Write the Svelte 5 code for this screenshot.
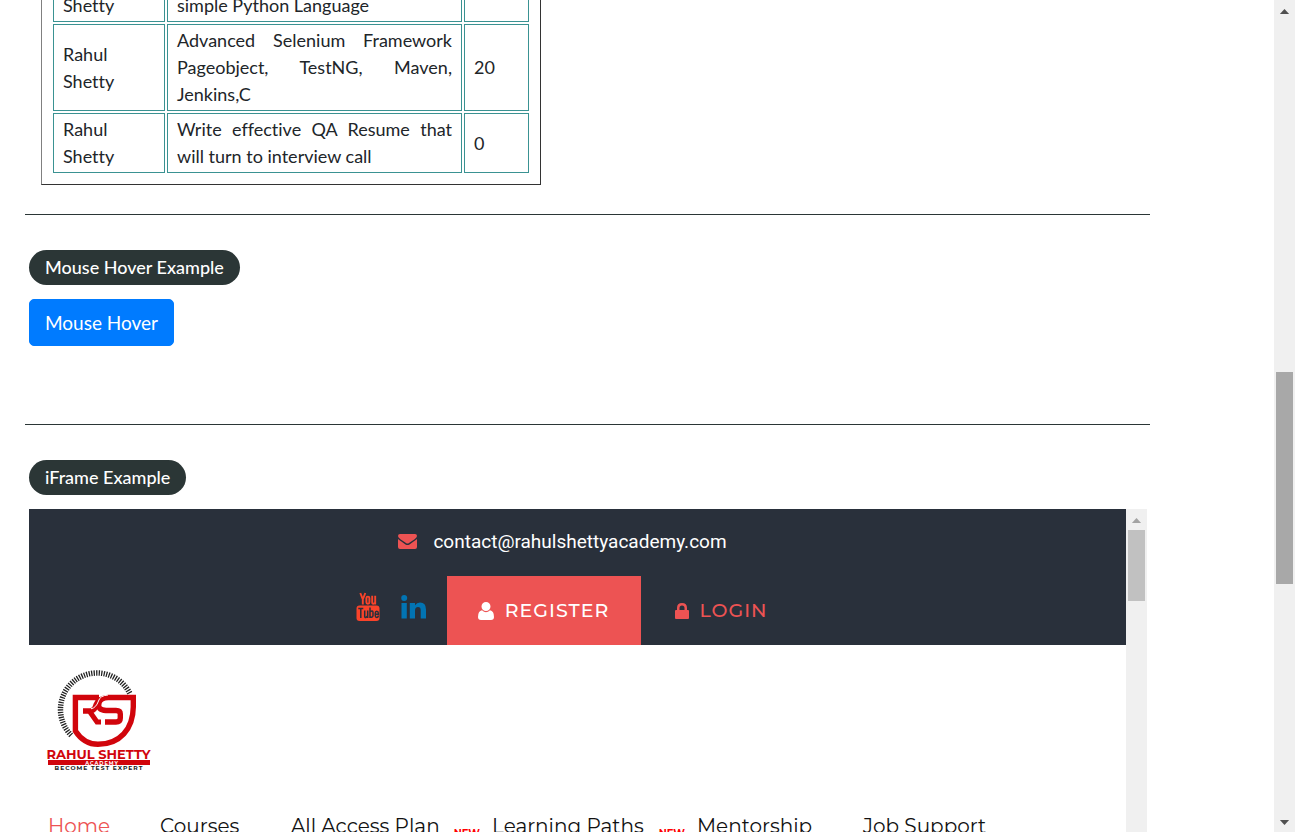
<script>
  const courses = [
    { instructor: 'Rahul Shetty', title: 'Master Selenium Automation in simple Python Language', price: '' },
    { instructor: 'Rahul Shetty', title: 'Advanced Selenium Framework Pageobject, TestNG, Maven, Jenkins,C', price: '20' },
    { instructor: 'Rahul Shetty', title: 'Write effective QA Resume that will turn to interview call', price: '0' }
  ];
  const links = [
    { label: 'Home', active: true },
    { label: 'Courses' },
    { label: 'All Access Plan', badge: true },
    { label: 'Learning Paths', badge: true },
    { label: 'Mentorship' },
    { label: 'Job Support' }
  ];
</script>

<div class="page">
  <main>
    <table>
      <tbody>
        {#each courses as course}
          <tr>
            <td class="who">{course.instructor}</td>
            <td class="title">{course.title}</td>
            <td class="price">{course.price}</td>
          </tr>
        {/each}
      </tbody>
    </table>

    <section class="hover">
      <h2>Mouse Hover Example</h2>
      <button class="primary">Mouse Hover</button>
    </section>

    <section>
      <h2>iFrame Example</h2>
      <div class="frame">
        <div class="site">
          <header>
            <a class="mail" href="#contact">
              <svg width="19" height="15" viewBox="0 0 19 15" aria-hidden="true">
                <path fill="#ed5353" d="M0 2Q0 0 2 0H17Q19 0 19 2Q19 3.6 16.6 5.2L11 9Q9.500 10 8 9L2.400 5.200Q0 3.600 0 2ZM0 5Q1 6 3 7.300L7.500 10.400Q9.500 11.700 11.500 10.400L16 7.300Q18 6 19 5V13Q19 15 17 15H2Q0 15 0 13Z" />
              </svg>
              <span>contact@rahulshettyacademy.com</span>
            </a>
            <div class="actions">
              <a class="social" href="#youtube" aria-label="YouTube">
                <svg width="24" height="28" viewBox="0 0 24 28" aria-hidden="true">
                  <g fill="none" stroke="#f9432a" stroke-width="1.900">
                    <path d="M4.300 0 6.800 6.300V11.500M9.300 0 6.800 6.300" />
                    <rect x="10.400" y="3.600" width="3" height="7.200" rx="1.500" />
                    <path d="M16.200 2.800V9.500Q16.200 11 17.500 10.700 18.700 10.300 19.200 9.300M19.200 2.800V11.500" />
                  </g>
                  <rect x="0.500" y="12.500" width="23" height="15.500" rx="3" fill="#f9432a" />
                  <g fill="none" stroke="#29303b" stroke-width="1.500">
                    <path d="M2.300 15.500H7.300M4.800 15.500V25M8.700 17.500V23.500Q8.800 25 10 24.300L11.500 23.200M11.700 17.500V25M14 14.500V25M14 18.800Q17 17 17 19.500V22.700Q16.700 25 14 23.700M22.300 22.500Q22.300 24.400 20.800 24.400 19.300 24.400 19.300 22.700V20Q19.300 18.200 20.800 18.200 22.300 18.200 22.300 20V21.300H19.300" />
                  </g>
                </svg>
              </a>
              <a class="social" href="#linkedin" aria-label="LinkedIn">
                <svg width="25" height="24" viewBox="0 0 25 24" aria-hidden="true">
                  <g fill="#0274b3">
                    <circle cx="3.200" cy="3" r="3" />
                    <path d="M0.500 8H5.800V23.500H0.500ZM8.800 8H14V10.300Q15.800 7.600 19 7.600 25 7.600 25 14.600V23.500H19.700V15.300Q19.700 12 17 12 14 12 14 15.500V23.500H8.800Z" />
                  </g>
                </svg>
              </a>
              <a class="action register" href="#register">
                <svg width="16" height="18" viewBox="0 0 16 18" aria-hidden="true">
                  <path fill="#fff" d="M8 0A4.500 4.500 0 0 1 8 9A4.500 4.500 0 0 1 8 0ZM4 8.300Q8 12 12 8.300Q16 9 16 15Q16 18 13 18H3Q0 18 0 15Q0 9 4 8.300Z" />
                </svg>
                <span>REGISTER</span>
              </a>
              <a class="action login" href="#login">
                <svg width="14" height="16" viewBox="0 0 14 16" aria-hidden="true">
                  <path fill="#ed5353" fill-rule="evenodd" d="M2 7V5Q2 0 7 0T12 5V7H13Q14 7 14 8V15Q14 16 13 16H1Q0 16 0 15V8Q0 7 1 7ZM4.500 7H9.500V5Q9.500 2.400 7 2.400T4.500 5Z" />
                </svg>
                <span>LOGIN</span>
              </a>
            </div>
          </header>

          <a class="logo" href="#home" aria-label="Rahul Shetty Academy">
            <svg width="102" height="102" viewBox="0 0 102 102" aria-hidden="true">
              <path d="M23.200 66.300A36.500 36.500 0 1 1 82.100 25.100" fill="none" stroke="#222" stroke-width="5.500" stroke-dasharray="1.300 1.200" />
              <g fill="none" stroke="#d1050c" stroke-width="5.400">
                <path d="M51 28.500H27.400V62Q36 75.300 50 75.300C72 75.300 85 60 85.300 38V28.500H60Q52 29 51 34Q49 41 58 41.500H68Q72.300 41.500 72.300 45V49Q72.300 53 68 53H57" />
                <path d="M35 42H43Q47 41 48 36L52 28.500" />
                <path d="M42 43 49 53H53" stroke-width="5" />
              </g>
              <path d="M60 26Q52 26.500 50.500 32Q48 39 43 39.800" fill="none" stroke="#fff" stroke-width="1" />
              <rect y="91" width="102" height="5" fill="#d1050c" />
              <g text-anchor="middle" font-family="Montserrat, Inter, sans-serif">
                <text x="50.500" y="90" font-size="13" font-weight="700" fill="#d1050c">RAHUL SHETTY</text>
                <text x="54" y="95.500" font-size="5" font-weight="700" letter-spacing="1" fill="#fff">ACADEMY</text>
                <text x="51" y="101" font-size="6" font-weight="700" letter-spacing="1" fill="#222">BECOME TEST EXPERT</text>
              </g>
            </svg>
          </a>

          <nav>
            {#each links as link}
              <a href="#top" class:active={link.active}>
                {link.label}
                {#if link.badge}<sup>NEW</sup>{/if}
              </a>
            {/each}
          </nav>
        </div>
        <div class="bar inner">
          <i class="arrow up"></i>
          <i class="thumb"></i>
        </div>
      </div>
    </section>
  </main>

  <div class="bar outer">
    <i class="arrow up"></i>
    <i class="before"></i>
    <i class="thumb"></i>
    <i class="after"></i>
    <i class="arrow down"></i>
  </div>
</div>

<style>
  :global(body) {
    margin: 0;
    background: #fff;
  }
  .page {
    display: flex;
    height: 100vh;
    overflow: hidden;
    font-family: "Trebuchet MS", Lato, sans-serif;
    font-size: 18px;
    font-variant-ligatures: none;
    line-height: 27px;
    color: #212529;
  }
  .page * {
    box-sizing: border-box;
  }
  a {
    color: inherit;
    text-decoration: none;
  }
  svg {
    display: block;
    flex: none;
    overflow: visible;
  }
  main {
    flex: 1;
    min-width: 0;
    margin: -50px 124px 0 25px;
  }
  table {
    width: 500px;
    margin: 0 0 29px 16px;
    padding: 9px;
    border: 1px solid #333;
    border-left-color: #808080;
    border-spacing: 2px;
    table-layout: fixed;
  }
  td {
    padding: 2px 9px;
    border: 1px solid #3a9292;
    vertical-align: middle;
  }
  .who {
    width: 112px;
    padding-right: 40px;
  }
  .title {
    width: 295px;
    text-align: justify;
  }
  section {
    padding: 35px 3px 0 4px;
    border-top: 1px solid #2b3636;
  }
  .hover {
    height: 210px;
  }
  h2 {
    width: fit-content;
    margin: 0 0 14px;
    padding: 4px 16px;
    border-radius: 18px;
    background: #2b3636;
    color: #fff;
    font-size: 18px;
    font-weight: 500;
    line-height: 27px;
  }
  .primary {
    padding: 9px 15px;
    border: 1px solid #007bff;
    border-radius: 5px;
    background: #007bff;
    color: #fff;
    font: inherit;
    font-size: 19px;
  }
  .frame {
    display: flex;
    height: 500px;
  }
  .site {
    flex: 1;
    min-width: 0;
    font-family: Montserrat, Inter, sans-serif;
  }
  header {
    height: 136px;
    background: #29303b;
    color: #fff;
  }
  .mail {
    display: flex;
    justify-content: center;
    align-items: center;
    gap: 16px;
    height: 67px;
    padding: 0 30px 2px 0;
    font-family: Roboto, sans-serif;
    font-size: 19px;
  }
  .actions {
    display: flex;
    justify-content: center;
    height: 69px;
    padding-left: 2px;
  }
  .social {
    display: flex;
    align-items: center;
    margin-right: 21px;
    padding-bottom: 8px;
  }
  .action {
    display: flex;
    align-items: center;
    justify-content: center;
    gap: 11px;
    font-size: 19px;
    font-weight: 500;
    letter-spacing: 1px;
  }
  .register {
    width: 194px;
    background: #ed5353;
  }
  .login {
    width: 161px;
    color: #ed5353;
  }
  .logo {
    display: block;
    width: fit-content;
    margin: 24px 0 0 19px;
  }
  nav {
    display: grid;
    grid-template-columns: 112px 131px 201px 205px 166px auto;
    margin: 42px 0 0 19px;
    color: #111;
    font-size: 20px;
    white-space: nowrap;
  }
  nav a {
    position: relative;
  }
  .active {
    color: #ed5353;
  }
  sup {
    position: absolute;
    right: 12px;
    top: 13px;
    color: #f00;
    font-size: 10px;
    font-weight: 700;
    line-height: 16px;
  }
  .bar {
    display: flex;
    flex: none;
    flex-direction: column;
    width: 21px;
    background: #f0f0f0;
  }
  .arrow {
    flex: none;
    height: 21px;
    background: #505050;
    background-clip: content-box;
    padding: 9px 6px 7px;
    clip-path: polygon(50% 9px, 72% 14px, 28% 14px);
  }
  .down {
    clip-path: polygon(28% 9px, 72% 9px, 50% 14px);
  }
  .inner .arrow {
    background-color: #a3a3a3;
  }
  .thumb {
    margin: 0 2px;
    background: #a8a8a8;
  }
  .inner .thumb {
    height: 71px;
    background: #c1c1c1;
  }
  .before {
    flex: 351;
  }
  .outer .thumb {
    flex: 212;
  }
  .after {
    flex: 227;
  }
</style>
